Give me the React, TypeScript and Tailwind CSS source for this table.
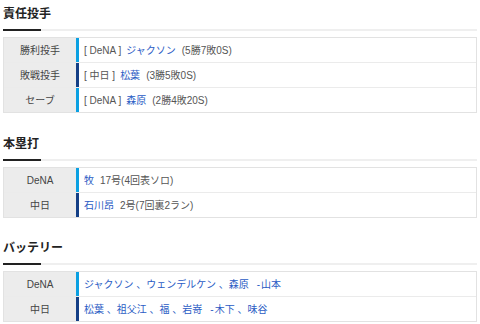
import React from 'react';

type Row = { label: string; team: 'dena' | 'chunichi'; content: React.ReactNode };

const FONT = '"Liberation Sans", "Noto Sans CJK JP", sans-serif';

const Link = ({ children }: { children: React.ReactNode }) => (
	<span className="text-[#2a5bc4]">{children}</span>
);

function Heading({ title }: { title: string }) {
	return (
		<div className="relative pt-[4px] pb-[5px] border-b-2 border-[#efefef]">
			<h2 className="text-[12px] leading-[20px] font-bold text-[#222]">{title}</h2>
			<span className="absolute left-0 bottom-[-2px] w-[38px] h-[2px] bg-[#222]"></span>
		</div>
	);
}

function Table({ rows }: { rows: Row[] }) {
	return (
		<div className="mt-[6px] border border-[#e2e2e2]">
			{rows.map((r, i) => (
				<div key={i} className={`flex h-[24px] ${i > 0 ? 'border-t border-[#ebebeb]' : ''} box-content`}>
					<div className="w-[72px] shrink-0 bg-[#ececec] flex items-center justify-center text-[10px] text-[#444]">
						{r.label}
					</div>
					<div className={`w-[3px] shrink-0 ${r.team === 'dena' ? 'bg-[#0aa0e2]' : 'bg-[#143f86]'}`}></div>
					<div className="flex-1 flex items-center pl-[5px] text-[10px] text-[#555] whitespace-nowrap">
						{r.content}
					</div>
				</div>
			))}
		</div>
	);
}

export default function App() {
	const pitchers: Row[] = [
		{
			label: '勝利投手', team: 'dena',
			content: <><span>[ DeNA ]</span><span className="ml-[5px]"><Link>ジャクソン</Link></span><span className="ml-[6px]">(5勝7敗0S)</span></>,
		},
		{
			label: '敗戦投手', team: 'chunichi',
			content: <><span>[ 中日 ]</span><span className="ml-[5px]"><Link>松葉</Link></span><span className="ml-[6px]">(3勝5敗0S)</span></>,
		},
		{
			label: 'セーブ', team: 'dena',
			content: <><span>[ DeNA ]</span><span className="ml-[5px]"><Link>森原</Link></span><span className="ml-[6px]">(2勝4敗20S)</span></>,
		},
	];

	const homeruns: Row[] = [
		{ label: 'DeNA', team: 'dena', content: <><Link>牧</Link><span className="ml-[6px]">17号(4回表ソロ)</span></> },
		{ label: '中日', team: 'chunichi', content: <><Link>石川昂</Link><span className="ml-[6px]">2号(7回裏2ラン)</span></> },
	];

	const battery: Row[] = [
		{
			label: 'DeNA', team: 'dena',
			content: <Link>ジャクソン 、ウェンデルケン 、森原<span className="ml-[8px] mr-[1px]">-</span>山本</Link>,
		},
		{
			label: '中日', team: 'chunichi',
			content: <Link>松葉 、祖父江 、福 、岩嵜<span className="ml-[8px] mr-[1px]">-</span>木下 、味谷</Link>,
		},
	];

	return (
		<div className="w-[480px] h-[324px] bg-white px-[3px] overflow-hidden" style={{ fontFamily: FONT }}>
			<section>
				<Heading title="責任投手" />
				<Table rows={pitchers} />
			</section>
			<section className="mt-[17px]">
				<Heading title="本塁打" />
				<Table rows={homeruns} />
			</section>
			<section className="mt-[16px]">
				<Heading title="バッテリー" />
				<Table rows={battery} />
			</section>
		</div>
	);
}
